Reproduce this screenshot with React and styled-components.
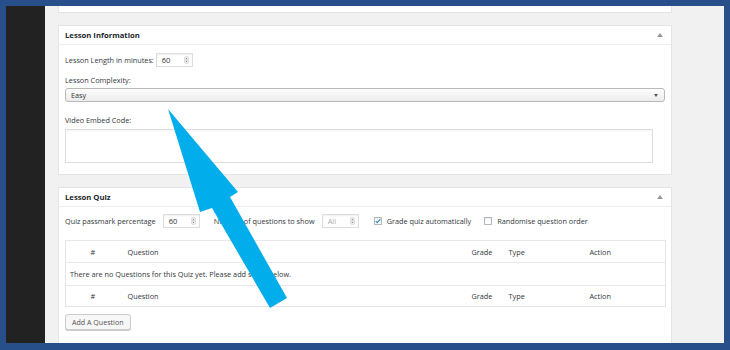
import React from "react";
import styled, { createGlobalStyle } from "styled-components";

const GlobalStyle = createGlobalStyle`
  body {
    margin: 0;
    font-family: "Open Sans", "Liberation Sans", sans-serif;
    color: #444;
  }
`;

const Frame = styled.div`
  position: relative;
  width: 730px;
  height: 350px;
  box-sizing: border-box;
  padding: 6px 6px 7px 6px;
  background: #27508b;
  overflow: hidden;
`;

const Screen = styled.div`
  display: flex;
  height: 100%;
`;

const Sidebar = styled.div`
  width: 39px;
  flex-shrink: 0;
  background: #222;
`;

const Main = styled.div`
  flex: 1;
  display: flex;
  flex-direction: column;
  gap: 12px;
  padding-left: 13px;
  background: #f1f1f1;
  overflow: hidden;
`;

const Panel = styled.div`
  width: 614px;
  flex-shrink: 0;
  box-sizing: border-box;
  background: #fff;
  border: 1px solid #e5e5e5;
  border-top: ${(p) => (p.$cut ? "none" : "1px solid #e5e5e5")};
  height: ${(p) => (p.$cut ? "7px" : "auto")};
`;

const PanelHead = styled.div`
  display: flex;
  align-items: center;
  justify-content: space-between;
  height: 18px;
  padding: 0 8px 0 6px;
  border-bottom: 1px solid #eee;
  font-size: 7.7px;
  font-weight: 700;
  color: #23282d;
`;

const Toggle = styled.span`
  width: 0;
  height: 0;
  border-left: 3px solid transparent;
  border-right: 3px solid transparent;
  border-bottom: 4px solid #999;
`;

const PanelBody = styled.div`
  padding: ${(p) => p.$pad};
`;

const Row = styled.div`
  display: flex;
  align-items: center;
  height: 14px;
  margin-top: ${(p) => p.$mt || 0}px;
`;

const Label = styled.span`
  font-size: 7.3px;
  color: #32373c;
  white-space: nowrap;
  margin-right: ${(p) => p.$mr || 0}px;
  margin-left: ${(p) => p.$ml || 0}px;
`;

const Gap = styled.span`
  width: ${(p) => p.$w}px;
`;

const NumberBox = styled.div`
  display: flex;
  align-items: center;
  justify-content: space-between;
  box-sizing: border-box;
  width: ${(p) => p.$w}px;
  height: ${(p) => p.$h || 14}px;
  padding: 0 3px 0 5px;
  border: 1px solid #ddd;
  box-shadow: inset 0 1px 2px rgba(0, 0, 0, 0.07);
  font-size: 7.5px;
  color: ${(p) => (p.$muted ? "#aaa" : "#333")};
`;

const Select = styled.div`
  display: flex;
  align-items: center;
  justify-content: space-between;
  box-sizing: border-box;
  width: 600px;
  height: 14px;
  margin-top: 1px;
  padding: 0 6px 0 5px;
  border: 1px solid #b9b9b9;
  border-radius: 3px;
  background: linear-gradient(#fdfdfd, #ececec);
  font-size: 7.3px;
  color: #333;
`;

const Caret = styled.span`
  width: 0;
  height: 0;
  border-left: 2px solid transparent;
  border-right: 2px solid transparent;
  border-top: 3px solid #555;
`;

const TextArea = styled.div`
  box-sizing: border-box;
  width: 588px;
  height: 34px;
  margin-top: 2px;
  border: 1px solid #ddd;
  box-shadow: inset 0 1px 2px rgba(0, 0, 0, 0.05);
`;

const Check = styled.span`
  display: inline-flex;
  align-items: center;
  justify-content: center;
  box-sizing: border-box;
  width: 8px;
  height: 8px;
  margin-right: 5px;
  border: 1px solid #b4b9be;
  box-shadow: inset 0 1px 2px rgba(0, 0, 0, 0.1);
`;

const QuizTable = styled.table`
  width: 600px;
  margin-top: 12px;
  border-collapse: collapse;
  border: 1px solid #e5e5e5;
  font-size: 7.3px;
  color: #32373c;
  table-layout: fixed;
`;

const Cell = styled.td`
  height: ${(p) => p.$h}px;
  padding: 0 0 0 ${(p) => (p.$center ? 0 : 8)}px;
  text-align: ${(p) => (p.$center ? "center" : "left")};
  border-top: 1px solid #e8e8e8;
  white-space: nowrap;
`;

const Button = styled.div`
  display: inline-flex;
  align-items: center;
  box-sizing: border-box;
  height: 16px;
  margin-top: 7px;
  padding: 0 6px;
  border: 1px solid #ccc;
  border-radius: 3px;
  background: #f7f7f7;
  box-shadow: 0 1px 0 #ccc;
  font-size: 7.1px;
  color: #555;
`;

const Overlay = styled.svg`
  position: absolute;
  left: 0;
  top: 0;
  pointer-events: none;
`;

function Spinner() {
  return (
    <svg width="5" height="8" viewBox="0 0 5 8">
      <rect x="0.5" y="0.5" width="4" height="7" rx="1.5" fill="#f3f3f3" stroke="#ccc" strokeWidth="0.6" />
      <path d="M1.3 3.2 L2.5 1.8 L3.7 3.2 Z M1.3 4.8 L2.5 6.2 L3.7 4.8 Z" fill="#888" />
    </svg>
  );
}

function NumberInput({ value, w, muted }) {
  return (
    <NumberBox $w={w} $muted={muted}>
      <span>{value}</span>
      <Spinner />
    </NumberBox>
  );
}

function CheckBox({ checked }) {
  return (
    <Check>
      {checked && (
        <svg width="7" height="6" viewBox="0 0 7 6">
          <path d="M0.8 3.2 L2.6 5 L6.2 0.8" fill="none" stroke="#1e8cbe" strokeWidth="1.3" />
        </svg>
      )}
    </Check>
  );
}

const columns = [
  { w: 54, label: "#", center: true },
  { w: 344, label: "Question" },
  { w: 37, label: "Grade" },
  { w: 81, label: "Type" },
  { w: 84, label: "Action" },
];

function HeadRow({ h }) {
  return (
    <tr>
      {columns.map((c) => (
        <Cell key={c.label} $h={h} $center={c.center}>
          {c.label}
        </Cell>
      ))}
    </tr>
  );
}

export default function App() {
  return (
    <>
      <GlobalStyle />
      <Frame>
        <Screen>
          <Sidebar />
          <Main>
            <Panel $cut />

            <Panel>
              <PanelHead>
                Lesson Information
                <Toggle />
              </PanelHead>
              <PanelBody $pad="8px 6px 11px">
                <Row>
                  <Label $mr={2}>Lesson Length in minutes:</Label>
                  <NumberInput value="60" w={37} />
                </Row>
                <Row $mt={6}>
                  <Label>Lesson Complexity:</Label>
                </Row>
                <Select>
                  Easy
                  <Caret />
                </Select>
                <Row $mt={11}>
                  <Label>Video Embed Code:</Label>
                </Row>
                <TextArea />
              </PanelBody>
            </Panel>

            <Panel>
              <PanelHead>
                Lesson Quiz
                <Toggle />
              </PanelHead>
              <PanelBody $pad="7px 6px 13px">
                <Row>
                  <Label $mr={7}>Quiz passmark percentage</Label>
                  <NumberInput value="60" w={37} />
                  <Label $mr={7} $ml={14}>
                    Number of questions to show
                  </Label>
                  <NumberInput value="All" w={37} muted />
                  <Gap $w={15} />
                  <CheckBox checked />
                  <Label $mr={13}>Grade quiz automatically</Label>
                  <CheckBox />
                  <Label>Randomise question order</Label>
                </Row>
                <QuizTable>
                  <colgroup>
                    {columns.map((c) => (
                      <col key={c.label} style={{ width: c.w }} />
                    ))}
                  </colgroup>
                  <tbody>
                    <HeadRow h={21} />
                    <tr>
                      <Cell $h={22} colSpan={5} style={{ paddingLeft: 4 }}>
                        There are no Questions for this Quiz yet. Please add some below.
                      </Cell>
                    </tr>
                    <HeadRow h={20} />
                  </tbody>
                </QuizTable>
                <Button>Add A Question</Button>
              </PanelBody>
            </Panel>
          </Main>
        </Screen>
        <Overlay width="730" height="350" viewBox="0 0 730 350">
          <polygon
            points="168,109 238,192 230,197 287,298 270,308 212,208 200,212"
            fill="#02adec"
          />
        </Overlay>
      </Frame>
    </>
  );
}
